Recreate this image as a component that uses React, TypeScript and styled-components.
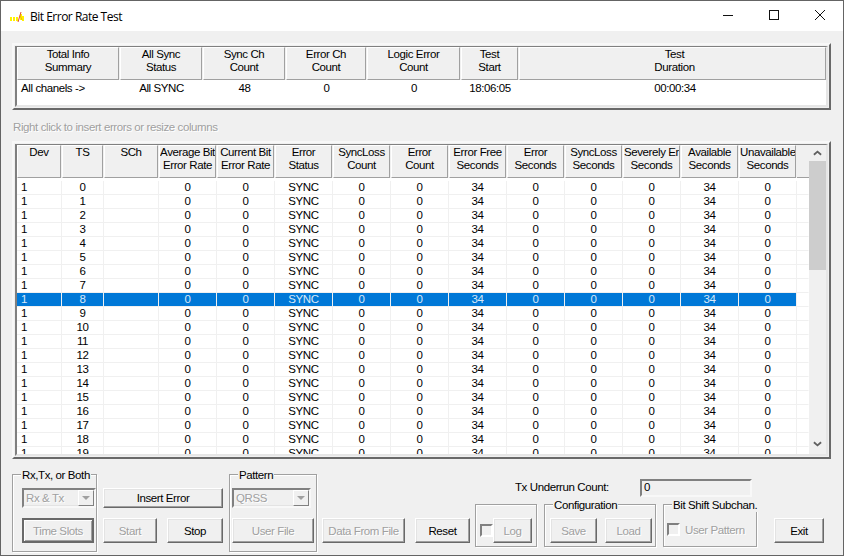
import styled, { createGlobalStyle, css } from "styled-components";

const GlobalStyle = createGlobalStyle`
  html, body { margin: 0; padding: 0; background: #f0f0f0; }
  body { font-family: "Liberation Sans", Arial, sans-serif; font-size: 11.5px; letter-spacing: -0.4px; color: #000; }
  * { box-sizing: border-box; }
`;

const summaryColumns = [
  { title: ["Total Info", "Summary"], value: "All chanels ->", w: 103, left: true },
  { title: ["All Sync", "Status"], value: "All SYNC", w: 83 },
  { title: ["Sync Ch", "Count"], value: "48", w: 83 },
  { title: ["Error Ch", "Count"], value: "0", w: 81 },
  { title: ["Logic Error", "Count"], value: "0", w: 94 },
  { title: ["Test", "Start"], value: "18:06:05", w: 58 },
  { title: ["Test", "Duration"], value: "00:00:34", w: 308 },
];

const gridColumns = [
  { title: ["Dev"], w: 45 },
  { title: ["TS"], w: 42 },
  { title: ["SCh"], w: 55 },
  { title: ["Average Bit", "Error Rate"], w: 58 },
  { title: ["Current Bit", "Error Rate"], w: 58 },
  { title: ["Error", "Status"], w: 58 },
  { title: ["SyncLoss", "Count"], w: 58 },
  { title: ["Error", "Count"], w: 58 },
  { title: ["Error Free", "Seconds"], w: 58 },
  { title: ["Error", "Seconds"], w: 58 },
  { title: ["SyncLoss", "Seconds"], w: 58 },
  { title: ["Severely Err", "Seconds"], w: 58 },
  { title: ["Available", "Seconds"], w: 58 },
  { title: ["Unavailable", "Seconds"], w: 58 },
];

const gridTemplate = gridColumns.map((c) => `${c.w}px`).join(" ") + " 12px";
const summaryTemplate = summaryColumns.map((c) => `${c.w}px`).join(" ");

const rows = Array.from({ length: 20 }, (_, ts) => [
  "1", String(ts), "", "0", "0", "SYNC", "0", "0", "34", "0", "0", "0", "34", "0", "",
]);

const App = () => {
  return (
    <Window>
      <GlobalStyle />
      <TitleBar>
        <AppIcon viewBox="0 0 16 12">
          <path d="M0 6h2v4H0zM3 6h2v4H3zM6 6h2v4H6zM10 3h2v6h-2zM12 5h2v5h-2z" fill="#fff200" />
          <path d="M8 11 11 1" stroke="#e8502c" strokeWidth="1" fill="none" />
          <path d="M10 4l2 5" stroke="#e8a01c" strokeWidth="0.8" fill="none" />
        </AppIcon>
        <Title>Bit Error Rate Test</Title>
        <Caption>
          <svg width="10" height="10" viewBox="0 0 10 10">
            <path d="M0 5.5h10" stroke="#111" fill="none" />
          </svg>
          <svg width="10" height="10" viewBox="0 0 10 10">
            <rect x="0.5" y="0.5" width="9" height="9" stroke="#111" fill="none" />
          </svg>
          <svg width="10" height="10" viewBox="0 0 10 10">
            <path d="M0 0l10 10M10 0 0 10" stroke="#111" fill="none" />
          </svg>
        </Caption>
      </TitleBar>

      <Body>
        <Frame>
          <FrameInner>
            <SummaryHead>
              {summaryColumns.map((c) => (
                <HeadCell key={c.title.join()}>
                  {c.title.map((t) => (
                    <span key={t}>{t}</span>
                  ))}
                </HeadCell>
              ))}
            </SummaryHead>
            <SummaryRow>
              {summaryColumns.map((c) => (
                <SummaryValue key={c.title.join()} $left={c.left}>
                  {c.value}
                </SummaryValue>
              ))}
            </SummaryRow>
          </FrameInner>
        </Frame>

        <Hint>Right click to insert errors or resize columns</Hint>

        <GridFrame>
          <GridInner>
            <GridMain>
              <GridHead>
                {gridColumns.map((c) => (
                  <HeadCell key={c.title.join()}>
                    {c.title.map((t) => (
                      <span key={t}>{t}</span>
                    ))}
                  </HeadCell>
                ))}
                <HeadFiller />
              </GridHead>
              <GridRows>
                {rows.map((r) => (
                  <GridRow key={r[1]} $selected={r[1] === "8"}>
                    {r.map((v, i) => (
                      <GridCell key={i} $left={i === 0} $filler={i === 14}>
                        {v}
                      </GridCell>
                    ))}
                  </GridRow>
                ))}
              </GridRows>
            </GridMain>
            <ScrollBar>
              <ScrollArrow viewBox="0 0 10 6">
                <path d="M1 5 5 1.5 9 5" stroke="#606060" strokeWidth="2" fill="none" />
              </ScrollArrow>
              <ScrollThumb />
              <ScrollArrow viewBox="0 0 10 6">
                <path d="M1 1 5 4.5 9 1" stroke="#606060" strokeWidth="2" fill="none" />
              </ScrollArrow>
            </ScrollBar>
          </GridInner>
        </GridFrame>

        <Controls>
          <Group $w={85} $h={78}>
            <Legend>Rx,Tx, or Both</Legend>
            <GroupStack>
              <Combo $w={74}>
                <ComboText>Rx &amp; Tx</ComboText>
                <ComboArrow />
              </Combo>
              <Button $w={72} $disabled $default>Time Slots</Button>
            </GroupStack>
          </Group>

          <MiddleStack>
            <Button $w={120} $h={20}>Insert Error</Button>
            <ButtonRow>
              <Button $w={54} $disabled>Start</Button>
              <Button $w={56}>Stop</Button>
            </ButtonRow>
          </MiddleStack>

          <Group $w={88} $h={78}>
            <Legend>Pattern</Legend>
            <PatternStack>
              <Combo $w={79}>
                <ComboText>QRSS</ComboText>
                <ComboArrow />
              </Combo>
              <Button $w={82} $disabled>User File</Button>
            </PatternStack>
          </Group>

          <LoneButton $gap={5}>
            <Button $w={83} $disabled>Data From File</Button>
          </LoneButton>
          <LoneButton $gap={10}>
            <Button $w={55}>Reset</Button>
          </LoneButton>

          <RightBlock>
            <UnderrunRow>
              <UnderrunLabel>Tx Underrun Count:</UnderrunLabel>
              <UnderrunField>0</UnderrunField>
            </UnderrunRow>
            <GroupsRow>
              <Group $w={62} $h={43}>
                <CheckRow>
                  <CheckBox />
                  <Button $w={39} $disabled>Log</Button>
                </CheckRow>
              </Group>
              <Group $w={112} $h={43}>
                <Legend>Configuration</Legend>
                <SaveLoadRow>
                  <Button $w={47} $disabled>Save</Button>
                  <Button $w={47} $disabled>Load</Button>
                </SaveLoadRow>
              </Group>
              <Group $w={94} $h={43}>
                <Legend>Bit Shift Subchan.</Legend>
                <PatternRow>
                  <CheckBox />
                  <DisabledLabel>User Pattern</DisabledLabel>
                </PatternRow>
              </Group>
            </GroupsRow>
          </RightBlock>

          <LoneButton $gap={17}>
            <Button $w={50}>Exit</Button>
          </LoneButton>
        </Controls>
      </Body>
    </Window>
  );
};

const disabledText = css`
  color: #a0a0a0;
  text-shadow: 1px 1px 0 #fff;
`;

const Window = styled.div`
  width: 844px;
  height: 556px;
  display: flex;
  flex-direction: column;
  overflow: hidden;
  border: 1px solid #646464;
  background: #f0f0f0;
`;

const TitleBar = styled.div`
  height: 30px;
  flex-shrink: 0;
  display: flex;
  align-items: center;
  background: #fff;
  padding-left: 9px;
`;

const AppIcon = styled.svg`
  width: 16px;
  height: 12px;
  margin-top: 2px;
`;

const Title = styled.div`
  margin-left: 4px;
  font-family: "Open Sans", sans-serif;
  font-size: 12px;
  letter-spacing: -0.5px;
`;

const Caption = styled.div`
  margin-left: auto;
  display: flex;
  gap: 36px;
  padding: 0 18px 2px 0;
  align-items: center;

  svg {
    display: block;
  }
`;

const Body = styled.div`
  flex: 1;
  padding: 12px 0 0 11px;
  display: flex;
  flex-direction: column;
`;

const Frame = styled.div`
  width: 819px;
  height: 67px;
  border: 2px solid;
  border-color: #f8f8f8 #696969 #696969 #f8f8f8;
  padding: 1px;
  flex-shrink: 0;
`;

const FrameInner = styled.div`
  height: 100%;
  border: 2px solid;
  border-top-width: 1px;
  border-color: #808080 #e6e6e6 #e6e6e6 #808080;
  background: #fff;
  overflow: hidden;
`;

const SummaryHead = styled.div`
  display: grid;
  grid-template-columns: ${summaryTemplate};
  height: 33px;
  background: #f0f0f0;

  > div:last-child {
    padding-left: 4px;
  }
`;

const HeadCell = styled.div`
  display: flex;
  flex-direction: column;
  align-items: stretch;
  text-align: center;
  line-height: 13px;
  white-space: nowrap;
  overflow: hidden;
  border: 1px solid;
  border-color: #fff #a0a0a0 #a0a0a0 #fff;
  margin-right: 1px;
  background: #f0f0f0;
`;

const SummaryRow = styled.div`
  display: grid;
  grid-template-columns: ${summaryTemplate};
  height: 14px;
  margin-top: 1px;

  > div:last-child {
    padding-left: 4px;
  }
`;

const SummaryValue = styled.div<{ $left?: boolean }>`
  line-height: 14px;
  text-align: ${(p) => (p.$left ? "left" : "center")};
  padding-left: ${(p) => (p.$left ? "4px" : "0")};
`;

const Hint = styled.div`
  ${disabledText}
  height: 31px;
  padding: 10px 0 0 1px;
  line-height: 14px;
`;

const GridFrame = styled(Frame)`
  height: 318px;
`;

const GridInner = styled(FrameInner)`
  display: flex;
`;

const GridMain = styled.div`
  width: 792px;
  display: flex;
  flex-direction: column;
  overflow: hidden;
`;

const GridHead = styled.div`
  display: grid;
  grid-template-columns: ${gridTemplate};
  height: 33px;
  flex-shrink: 0;
  background: #f0f0f0;
`;

const HeadFiller = styled.div`
  border-bottom: 1px solid #a0a0a0;
  background: #f0f0f0;
`;

const GridRows = styled.div`
  flex: 1;
  padding-top: 3px;
  overflow: hidden;
  background: #fff;
`;

const GridRow = styled.div<{ $selected?: boolean }>`
  display: grid;
  grid-template-columns: ${gridTemplate};
  height: 14px;
  color: ${(p) => (p.$selected ? "#d8e8f8" : "#000")};
  background: ${(p) => (p.$selected ? "#0078d7" : "transparent")};
`;

const GridCell = styled.div<{ $left?: boolean; $filler?: boolean }>`
  line-height: 13px;
  height: 14px;
  text-align: ${(p) => (p.$left ? "left" : "center")};
  padding-left: ${(p) => (p.$left ? "4px" : "0")};
  border-right: 1px solid ${(p) => (p.$filler ? "transparent" : "#f0f0f0")};
  border-bottom: 1px solid #f0f0f0;
  ${(p) => p.$filler && "background: #fff;"}
`;

const ScrollBar = styled.div`
  width: 17px;
  flex-shrink: 0;
  display: flex;
  flex-direction: column;
  align-items: center;
  background: #f0f0f0;
`;

const ScrollArrow = styled.svg`
  width: 9px;
  height: 6px;
  margin: 5px 0;
  flex-shrink: 0;

  &:last-child {
    margin-bottom: 7px;
  }
`;

const ScrollThumb = styled.div`
  width: 17px;
  height: 109px;
  margin-bottom: auto;
  background: #cdcdcd;
`;

const Controls = styled.div`
  display: flex;
  align-items: flex-start;
  margin-top: 15px;
`;

const Group = styled.div<{ $w: number; $h: number }>`
  position: relative;
  width: ${(p) => p.$w}px;
  height: ${(p) => p.$h}px;
  flex-shrink: 0;
  border: 1px solid #a0a0a0;
  box-shadow: 1px 1px 0 #fff, inset 1px 1px 0 #fff;
`;

const Legend = styled.div`
  position: absolute;
  top: -7px;
  left: 8px;
  padding: 0 1px;
  line-height: 14px;
  background: #f0f0f0;
  white-space: nowrap;
`;

const GroupStack = styled.div`
  display: flex;
  flex-direction: column;
  gap: 10px;
  padding: 13px 0 0 9px;
`;

const PatternStack = styled(GroupStack)`
  padding-left: 2px;
`;

const MiddleStack = styled.div`
  width: 120px;
  margin: 14px 6px 0 6px;
  display: flex;
  flex-direction: column;
  gap: 10px;
`;

const ButtonRow = styled.div`
  display: flex;
  justify-content: space-between;
`;

const Button = styled.div<{ $w: number; $h?: number; $disabled?: boolean; $default?: boolean }>`
  width: ${(p) => p.$w}px;
  height: ${(p) => p.$h ?? 25}px;
  flex-shrink: 0;
  display: flex;
  align-items: center;
  justify-content: center;
  white-space: nowrap;
  border: 1px solid;
  border-color: #fff #696969 #696969 #fff;
  box-shadow: inset -1px -1px 0 #a0a0a0, inset 1px 1px 0 #e3e3e3;
  background: #f0f0f0;
  ${(p) => p.$disabled && disabledText}
  ${(p) =>
    p.$default &&
    css`
      border: 2px solid #696969;
      box-shadow: inset 1px 1px 0 #fff, inset -1px -1px 0 #a0a0a0;
    `}
`;

const Combo = styled.div<{ $w: number }>`
  width: ${(p) => p.$w}px;
  height: 20px;
  display: flex;
  align-items: center;
  justify-content: space-between;
  border: 2px solid;
  border-color: #808080 #f8f8f8 #f8f8f8 #808080;
  box-shadow: inset -1px -1px 0 #e3e3e3;
  background: #f0f0f0;
`;

const ComboText = styled.span`
  ${disabledText}
  padding-left: 2px;
`;

const ComboArrow = styled.span`
  position: relative;
  width: 16px;
  height: 16px;
  border: 1px solid;
  border-color: #fff #808080 #808080 #fff;
  background: #f0f0f0;

  &::after {
    content: "";
    position: absolute;
    left: 3px;
    top: 5px;
    border-left: 4px solid transparent;
    border-right: 4px solid transparent;
    border-top: 4px solid #a0a0a0;
  }
`;

const LoneButton = styled.div<{ $gap: number }>`
  margin: 44px 0 0 ${(p) => p.$gap}px;
`;

const RightBlock = styled.div`
  margin-left: 5px;
  width: 282px;
  flex-shrink: 0;
  padding-top: 5px;
`;

const UnderrunRow = styled.div`
  display: flex;
  align-items: center;
  padding-left: 40px;
  height: 18px;
`;

const UnderrunLabel = styled.div`
  width: 125px;
  padding-bottom: 3px;
  white-space: nowrap;
`;

const UnderrunField = styled.div`
  width: 112px;
  height: 18px;
  padding-left: 2px;
  line-height: 13px;
  border: 2px solid;
  border-color: #808080 #f8f8f8 #f8f8f8 #808080;
  background: #f0f0f0;
`;

const GroupsRow = styled.div`
  display: flex;
  gap: 7px;
  margin-top: 7px;
`;

const CheckRow = styled.div`
  display: flex;
  align-items: center;
  padding: 13px 0 0 4px;
`;

const CheckBox = styled.div`
  width: 13px;
  height: 13px;
  flex-shrink: 0;
  border: 2px solid;
  border-color: #808080 #fff #fff #808080;
  background: #f0f0f0;
`;

const SaveLoadRow = styled.div`
  display: flex;
  gap: 8px;
  padding: 13px 0 0 5px;
`;

const PatternRow = styled.div`
  display: flex;
  align-items: center;
  gap: 5px;
  padding: 18px 0 0 3px;
`;

const DisabledLabel = styled.span`
  ${disabledText}
  white-space: nowrap;
`;

export default App;
